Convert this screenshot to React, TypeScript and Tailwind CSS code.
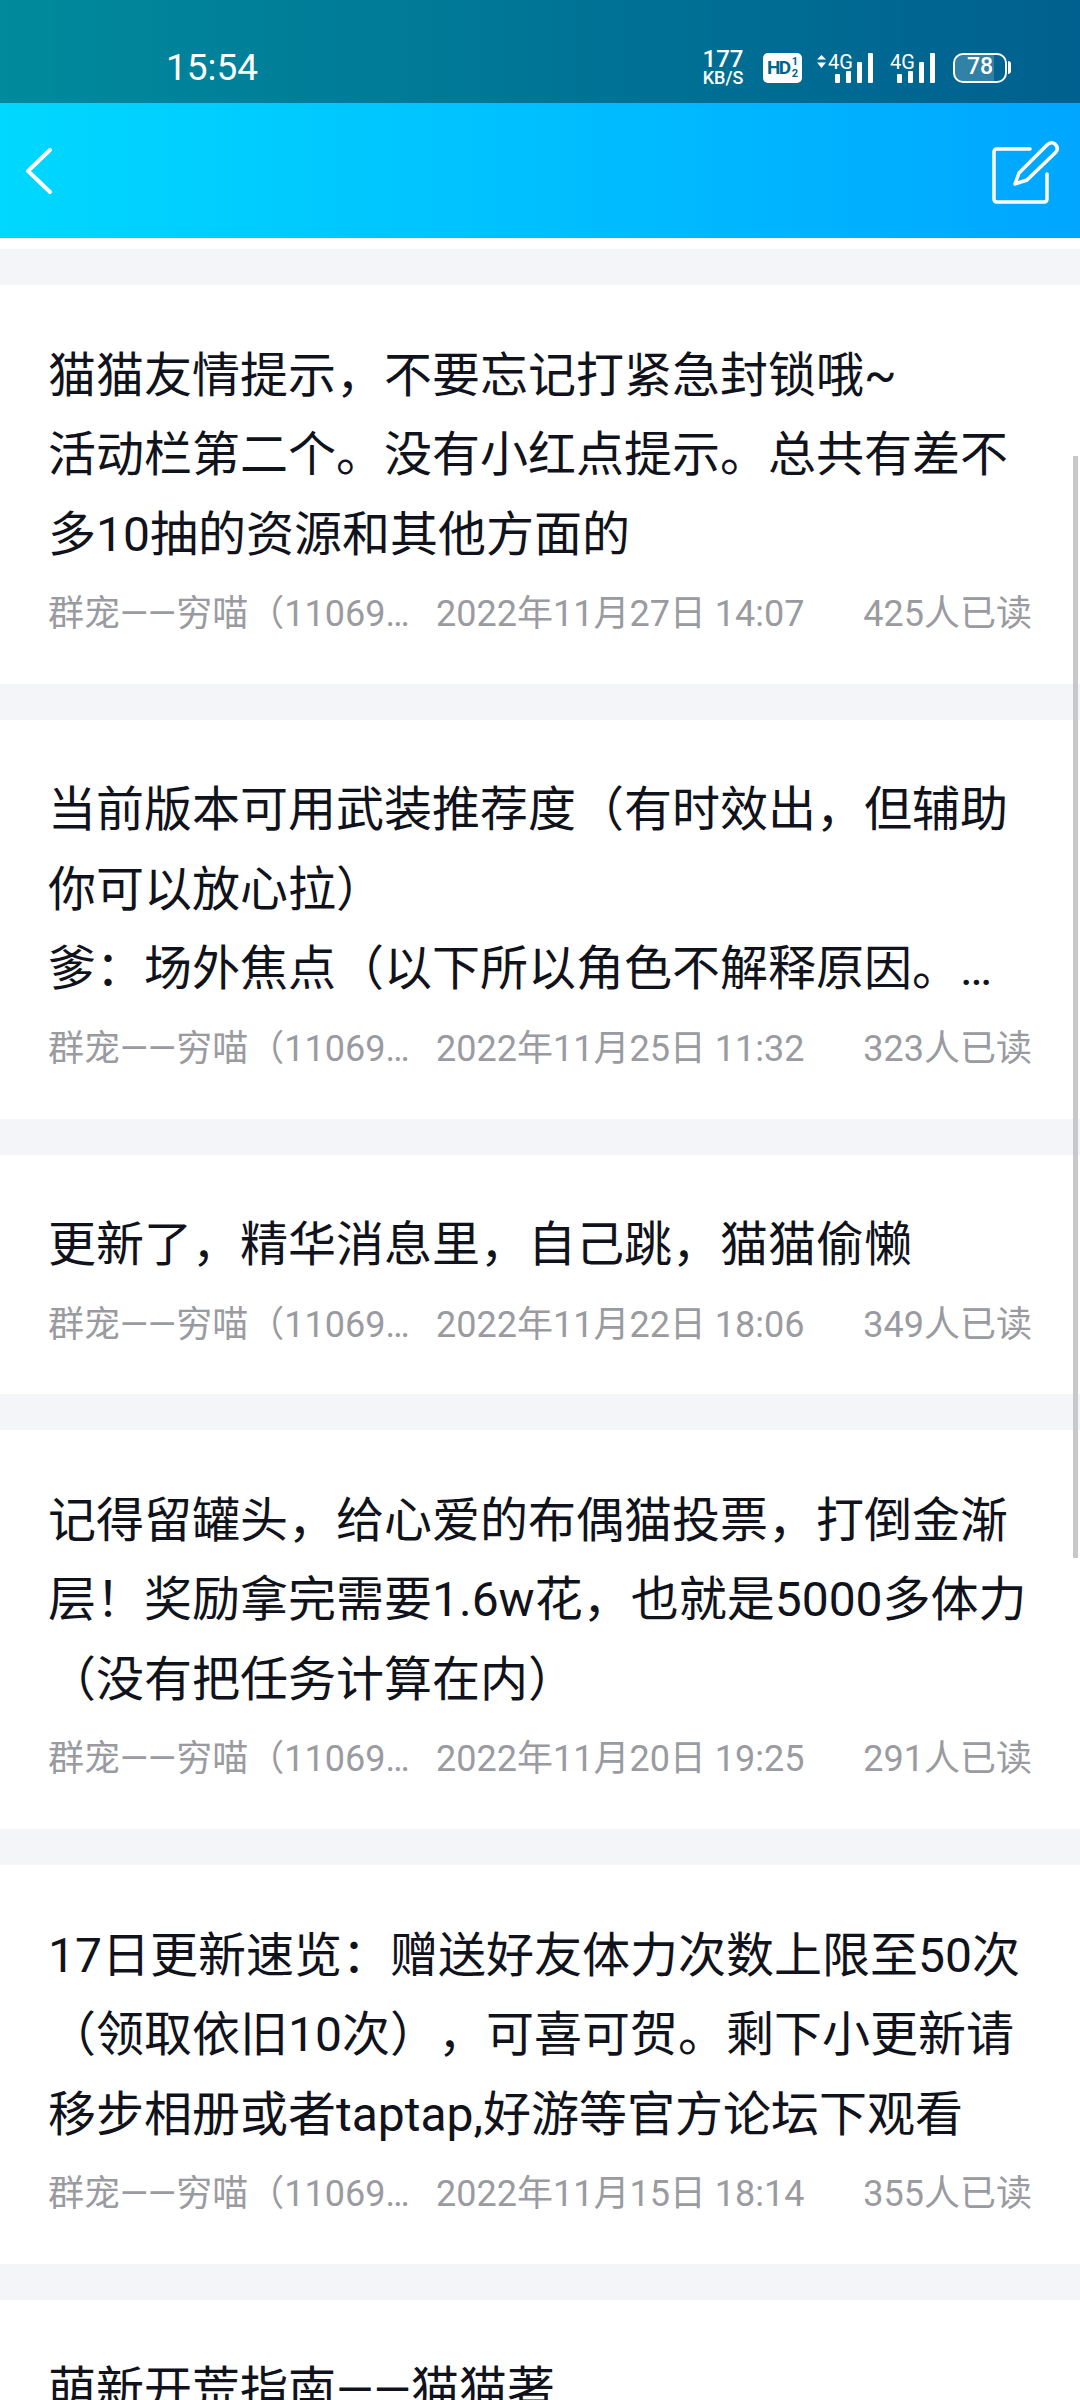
const posts = [
  {
    lines: ["猫猫友情提示，不要忘记打紧急封锁哦~", "活动栏第二个。没有小红点提示。总共有差不", "多10抽的资源和其他方面的"],
    date: "2022年11月27日 14:07",
    reads: "425人已读",
  },
  {
    lines: ["当前版本可用武装推荐度（有时效出，但辅助", "你可以放心拉）", "爹：场外焦点（以下所以角色不解释原因。…"],
    date: "2022年11月25日 11:32",
    reads: "323人已读",
  },
  {
    lines: ["更新了，精华消息里，自己跳，猫猫偷懒"],
    date: "2022年11月22日 18:06",
    reads: "349人已读",
  },
  {
    lines: ["记得留罐头，给心爱的布偶猫投票，打倒金渐", "层！奖励拿完需要1.6w花，也就是5000多体力", "（没有把任务计算在内）"],
    date: "2022年11月20日 19:25",
    reads: "291人已读",
  },
  {
    lines: ["17日更新速览：赠送好友体力次数上限至50次", "（领取依旧10次），可喜可贺。剩下小更新请", "移步相册或者taptap,好游等官方论坛下观看"],
    date: "2022年11月15日 18:14",
    reads: "355人已读",
  },
]

function Signal({ arrows }: { arrows?: boolean }) {
  // 信号格 + 4G
  return (
    <div className={arrows ? "relative h-[30px] w-[56px]" : "relative h-[30px] w-[44px]"}>
      <svg viewBox={arrows ? "-12 0 56 30" : "0 0 44 30"} className="absolute inset-0 h-full w-full" fill="#fff">
        <rect x="6" y="21" width="5" height="9" rx="1" />
        <rect x="17" y="18" width="5" height="12" rx="1" />
        <rect x="28" y="9" width="5" height="21" rx="1" />
        <rect x="39" y="0" width="5" height="30" rx="1" />
        {arrows && <path d="M-12 6.5 L-7.5 2 L-3 6.5 Z M-12 9.5 L-7.5 15 L-3 9.5 Z" />}
      </svg>
      <span
        className={
          arrows
            ? "absolute left-[11px] top-[-3px] text-[20px] leading-[24px] text-white"
            : "absolute left-[-1px] top-[-3px] text-[20px] leading-[24px] text-white"
        }
      >
        4G
      </span>
    </div>
  )
}

function Post({ lines, date, reads }: { lines: string[]; date: string; reads: string }) {
  return (
    <div className="bg-white pl-[48px] pr-[48px] pt-[50.5px] pb-[41.8px]">
      {lines.map((line) => (
        <div key={line} className="whitespace-nowrap text-[48px] leading-[79.5px] text-[#10131c] [text-spacing-trim:space-all]">
          {line}
        </div>
      ))}
      <div className="mt-[12px] flex h-[56px] items-center whitespace-nowrap text-[36px] text-[#9a9ba1] [text-spacing-trim:space-all]">
        <span className="w-[388px] shrink-0">群宠——穷喵（11069…</span>
        <span>{date}</span>
        <span className="ml-auto">{reads}</span>
      </div>
    </div>
  )
}

export default function App() {
  return (
    <div className="relative h-[2400px] w-[1080px] overflow-hidden bg-[#f4f5f9] font-['Roboto','Noto_Sans_CJK_SC',sans-serif]">
      {/* status bar */}
      <div className="flex h-[103px] items-center bg-gradient-to-r from-[#008a9c] to-[#00608f] pt-[32px] text-white">
        <span className="ml-[166px] text-[37px] leading-none">15:54</span>
        <div className="ml-auto mr-[69px] flex items-center">
          <div className="flex w-[40px] flex-col items-center">
            <span className="text-[24px] font-medium leading-[20px]">177</span>
            <span className="mt-[1px] text-[18px] font-medium leading-[16px]">KB/S</span>
          </div>
          <div className="ml-[20px] flex h-[30px] w-[39px] items-center justify-center rounded-[5px] bg-white font-bold text-[#00638f]">
            <span className="text-[19px] leading-none tracking-[-1.5px]">HD</span>
            <span className="ml-[2px] flex flex-col items-center text-[11px] leading-[12px]">
              <span>1</span>
              <span>2</span>
            </span>
          </div>
          <div className="ml-[15px]">
            <Signal arrows />
          </div>
          <div className="ml-[18px]">
            <Signal />
          </div>
          <div className="ml-[18px] flex items-center">
            <div className="flex h-[30px] w-[54px] items-center justify-center rounded-[10px] border-2 border-white bg-gradient-to-r from-[#ffffff30] from-[78%] to-transparent to-[78%] text-[23px] font-medium">
              78
            </div>
            <div className="ml-[1px] h-[13px] w-[3px] rounded-r bg-white" />
          </div>
        </div>
      </div>

      {/* nav bar */}
      <div className="flex h-[135px] items-center justify-between bg-gradient-to-r from-[#00d8ff] to-[#00a6ff]">
        <svg viewBox="0 0 30 50" className="ml-[24px] h-[50px] w-[30px]" fill="none" stroke="#fff" strokeWidth="4" strokeLinecap="round" strokeLinejoin="round">
          <path d="M26 4 L4 25 L26 46" />
        </svg>
        <svg viewBox="0 0 72 66" className="mr-[18px] mt-[5px] h-[66px] w-[72px]" fill="none" stroke="#fff" strokeWidth="3.5" strokeLinecap="round" strokeLinejoin="round">
          <path d="M40 9 H7 Q4 9 4 12 V59 Q4 62 7 62 H54 Q57 62 57 59 V34" />
          <path d="M25 44 L29 33 L57 5 Q61 1 65 4 Q69 8 66 12 L37 40 Z" />
        </svg>
      </div>
      <div className="h-[11px] bg-white" />

      {/* post list */}
      <div className="flex flex-col gap-[36px] pt-[36px]">
        {posts.map((post) => (
          <Post key={post.date} {...post} />
        ))}
        <div className="bg-white pl-[48px] pt-[50.5px]">
          <div className="whitespace-nowrap text-[48px] leading-[79.5px] text-[#10131c]">萌新开荒指南——猫猫著</div>
        </div>
      </div>

      {/* scrollbar */}
      <div className="absolute right-[2px] top-[456px] h-[1102px] w-[5px] bg-[#c8c8cb]" />
    </div>
  )
}
